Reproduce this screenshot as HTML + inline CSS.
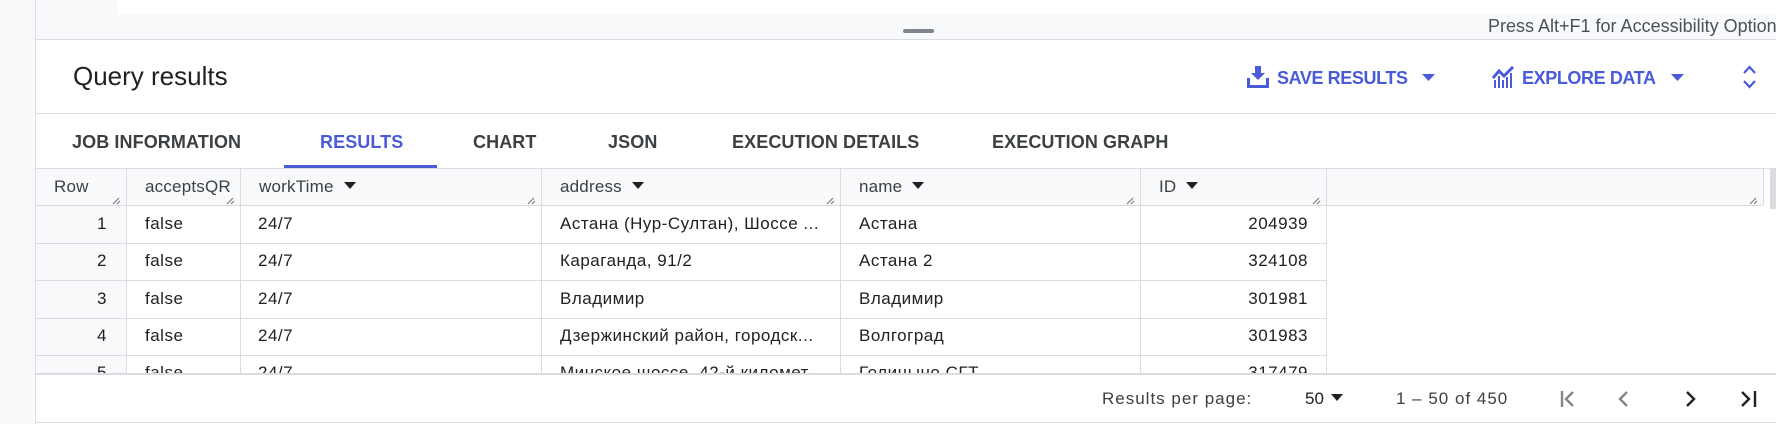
<!DOCTYPE html>
<html><head><meta charset="utf-8"><style>
*{margin:0;padding:0;box-sizing:border-box}
body{width:1776px;height:424px;overflow:hidden;background:#fff;font-family:"Liberation Sans",Arial,sans-serif;position:relative;color:#202124}
.a{position:absolute;white-space:nowrap}
.hl{position:absolute;height:1px;background:#dadce0}
.vl{position:absolute;width:1px;background:#dadce0}
.tab{position:absolute;top:132px;font-size:18px;font-weight:bold;color:#3c4043;letter-spacing:0.1px}
.hd{position:absolute;top:177px;font-size:17px;color:#3c4043;letter-spacing:0.2px}
.hd i{display:inline-block;width:0;height:0;border-left:6px solid transparent;border-right:6px solid transparent;border-top:7px solid #202124;margin-left:10px;vertical-align:3px}
.cell{position:absolute;font-size:17px;color:#202124;letter-spacing:0.5px}
.blue{color:#4a5bd8}
</style></head><body>
<div class="a" style="left:0;top:0;width:35px;height:424px;background:#f8f9fa"></div>
<div class="vl" style="left:35px;top:0;height:424px"></div>
<div class="a" style="left:36px;top:0;width:81px;height:15px;background:#f8f9fa"></div>
<div class="a" style="left:36px;top:15px;width:1740px;height:24px;background:#f8f9fa"></div>
<div class="a" style="left:903px;top:29px;width:31px;height:4px;border-radius:2px;background:#80868b"></div>
<div class="a" style="left:1488px;top:16px;font-size:18px;color:#4d5156">Press Alt+F1 for Accessibility Options</div>
<div class="hl" style="left:36px;top:39px;width:1740px"></div>
<div class="a" style="left:73px;top:61px;font-size:26px;color:#202124">Query results</div>
<svg class="a" style="left:1247px;top:65px" width="22" height="23" viewBox="0 0 22 23"><path d="M8 1h6v7h4l-7 7-7-7h4z" fill="#4a5bd8"/><path d="M1.5 13v8.5h19V13" fill="none" stroke="#4a5bd8" stroke-width="3"/></svg>
<div class="a blue" style="left:1277px;top:68px;font-size:18px;font-weight:bold;letter-spacing:-0.4px">SAVE RESULTS</div>
<svg class="a" style="left:1422px;top:74px" width="13" height="7"><path d="M0 0h13L6.5 7z" fill="#4a5bd8"/></svg>
<svg class="a" style="left:1492px;top:66px" width="23" height="22" viewBox="0 0 23 22"><path d="M1 12l6-7 5 5 9-9" fill="none" stroke="#4a5bd8" stroke-width="3"/><path d="M2 14h2v8H2zM6 10h2v12H6zM10 14h2v8h-2zM14 11h2v11h-2zM18 7h2v15h-2z" fill="#4a5bd8"/></svg>
<div class="a blue" style="left:1522px;top:68px;font-size:18px;font-weight:bold;letter-spacing:-0.4px">EXPLORE DATA</div>
<svg class="a" style="left:1671px;top:74px" width="13" height="7"><path d="M0 0h13L6.5 7z" fill="#4a5bd8"/></svg>
<svg class="a" style="left:1742px;top:64px" width="15" height="26"><path d="M2 9l5.5-6 5.5 6M2 17l5.5 6 5.5-6" fill="none" stroke="#4a5bd8" stroke-width="2.2"/></svg>
<div class="hl" style="left:36px;top:113px;width:1740px"></div>
<div class="tab" style="left:72px">JOB INFORMATION</div>
<div class="tab blue" style="left:320px">RESULTS</div>
<div class="tab" style="left:473px">CHART</div>
<div class="tab" style="left:608px">JSON</div>
<div class="tab" style="left:732px">EXECUTION DETAILS</div>
<div class="tab" style="left:992px">EXECUTION GRAPH</div>
<div class="a" style="left:284px;top:165px;width:153px;height:3px;background:#4a5bd8"></div>
<div class="a" style="left:36px;top:168px;width:1727px;height:37px;background:#f8f9fa"></div>
<div class="hl" style="left:36px;top:168px;width:1740px"></div>
<div class="hl" style="left:36px;top:205px;width:1727px"></div>
<div class="vl" style="left:126px;top:168px;height:205px"></div>
<div class="vl" style="left:240px;top:168px;height:205px"></div>
<div class="vl" style="left:541px;top:168px;height:205px"></div>
<div class="vl" style="left:840px;top:168px;height:205px"></div>
<div class="vl" style="left:1140px;top:168px;height:205px"></div>
<div class="vl" style="left:1326px;top:168px;height:205px"></div>
<div class="vl" style="left:1763px;top:168px;height:37px"></div>
<div class="a" style="left:1770px;top:169px;width:6px;height:40px;background:#dadce0"></div>
<div class="a" style="left:36px;top:206px;width:90px;height:167px;background:#f8f9fa"></div>
<div class="hd" style="left:54px">Row</div>
<div class="hd" style="left:145px">acceptsQR</div>
<div class="hd" style="left:259px">workTime<i></i></div>
<div class="hd" style="left:560px">address<i></i></div>
<div class="hd" style="left:859px">name<i></i></div>
<div class="hd" style="left:1159px">ID<i></i></div>
<svg class="a" style="left:0;top:0" width="1776" height="210">
<g stroke="#70757a" stroke-width="1">
<path d="M113 204l6-6M117 204l3-3M227 204l6-6M231 204l3-3M528 204l6-6M532 204l3-3M827 204l6-6M831 204l3-3M1127 204l6-6M1131 204l3-3M1313 204l6-6M1317 204l3-3M1750 204l6-6M1754 204l3-3"/></g></svg>
<div class="hl" style="left:36px;top:243px;width:1290px"></div>
<div class="hl" style="left:36px;top:280px;width:1290px"></div>
<div class="hl" style="left:36px;top:318px;width:1290px"></div>
<div class="hl" style="left:36px;top:355px;width:1290px"></div>
<div style="position:absolute;left:0;top:0;width:1776px;height:373px;overflow:hidden">
<div class="cell" style="left:36px;width:71px;text-align:right;top:214px">1</div>
<div class="cell" style="left:36px;width:71px;text-align:right;top:251px">2</div>
<div class="cell" style="left:36px;width:71px;text-align:right;top:289px">3</div>
<div class="cell" style="left:36px;width:71px;text-align:right;top:326px">4</div>
<div class="cell" style="left:36px;width:71px;text-align:right;top:363px">5</div>
<div class="cell" style="left:145px;top:214px">false</div>
<div class="cell" style="left:145px;top:251px">false</div>
<div class="cell" style="left:145px;top:289px">false</div>
<div class="cell" style="left:145px;top:326px">false</div>
<div class="cell" style="left:145px;top:363px">false</div>
<div class="cell" style="left:258px;top:214px">24/7</div>
<div class="cell" style="left:258px;top:251px">24/7</div>
<div class="cell" style="left:258px;top:289px">24/7</div>
<div class="cell" style="left:258px;top:326px">24/7</div>
<div class="cell" style="left:258px;top:363px">24/7</div>
<div class="cell" style="left:560px;top:214px">Астана (Нур-Султан), Шоссе ...</div>
<div class="cell" style="left:560px;top:251px">Караганда, 91/2</div>
<div class="cell" style="left:560px;top:289px">Владимир</div>
<div class="cell" style="left:560px;top:326px">Дзержинский район, городск...</div>
<div class="cell" style="left:560px;top:363px">Минское шоссе, 42-й километ...</div>
<div class="cell" style="left:859px;top:214px">Астана</div>
<div class="cell" style="left:859px;top:251px">Астана 2</div>
<div class="cell" style="left:859px;top:289px">Владимир</div>
<div class="cell" style="left:859px;top:326px">Волгоград</div>
<div class="cell" style="left:859px;top:363px">Голицыно СГТ</div>
<div class="cell" style="left:1140px;width:168px;text-align:right;top:214px">204939</div>
<div class="cell" style="left:1140px;width:168px;text-align:right;top:251px">324108</div>
<div class="cell" style="left:1140px;width:168px;text-align:right;top:289px">301981</div>
<div class="cell" style="left:1140px;width:168px;text-align:right;top:326px">301983</div>
<div class="cell" style="left:1140px;width:168px;text-align:right;top:363px">317479</div>
</div>
<div class="a" style="left:36px;top:373px;width:1740px;height:2px;background:#dadce0"></div>
<div class="hl" style="left:36px;top:422px;width:1740px"></div>
<div class="a" style="left:1102px;top:389px;font-size:17px;letter-spacing:1px;color:#3c4043">Results per page:</div>
<div class="a" style="left:1305px;top:389px;font-size:17px;color:#202124">50 <span style="display:inline-block;border-left:6px solid transparent;border-right:6px solid transparent;border-top:7px solid #202124;vertical-align:3px;margin-left:2px"></span></div>
<div class="a" style="left:1396px;top:389px;font-size:17px;letter-spacing:1px;color:#3c4043">1 – 50 of 450</div>
<svg class="a" style="left:1556px;top:388px" width="210" height="22"><g fill="none" stroke-width="2.4">
<path d="M6 3v16M17 4l-7 7 7 7M71 4l-7 7 7 7" stroke="#80868b"/>
<path d="M131 4l7 7-7 7M186 4l7 7-7 7M199 3v16" stroke="#202124"/></g></svg>
</body></html>
